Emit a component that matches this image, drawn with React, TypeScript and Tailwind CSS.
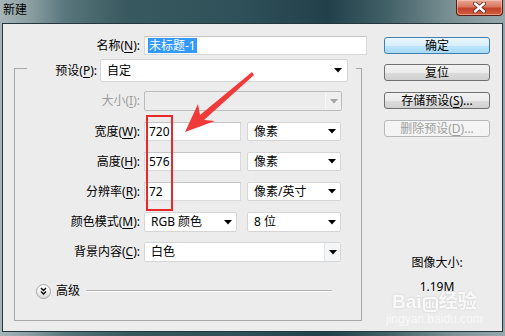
import React from 'react';

const font = "font-['Noto_Sans','Noto_Sans_CJK_SC',sans-serif]";

function DownArrow({ disabled = false }: { disabled?: boolean }) {
  return (
    <svg width="8" height="5" viewBox="0 0 8 5">
      <path d="M0 0h8L4 4.5z" fill={disabled ? '#a3a3a3' : '#000'} />
    </svg>
  );
}

function Label({ w, children, disabled = false }: { w: string; children: React.ReactNode; disabled?: boolean }) {
  return (
    <div className={`${w} shrink-0 text-right text-[12px] leading-[16px] ${disabled ? 'text-[#9c9c9c]' : 'text-black'}`}>
      {children}
    </div>
  );
}

function Key({ k }: { k: string }) {
  return <span className="underline underline-offset-[2px]">{k}</span>;
}

function Combo({ w, h, text, pr = 'pr-[4px]' }: { w: string; h: string; text: string; pr?: string }) {
  return (
    <div
      className={`${w} ${h} ${pr} flex shrink-0 items-center justify-between rounded-[2px] border border-[#d6d6d6] bg-white pl-[6px] text-[12px] leading-[16px] text-black`}
    >
      <span>{text}</span>
      <DownArrow />
    </div>
  );
}

function Field({ value }: { value: string }) {
  return (
    <div className="flex h-[19px] w-[97px] shrink-0 items-center border border-[#d9d9d9] border-t-[#c4c4c4] bg-white pl-[4px] text-[12px] leading-[16px] text-black">
      {value}
    </div>
  );
}

function Button({ children, main = false, disabled = false }: { children: React.ReactNode; main?: boolean; disabled?: boolean }) {
  const look = main
    ? 'border-[#3c7fb1] bg-[linear-gradient(180deg,#eaf6fd_0%,#d9f0fc_50%,#bee6fd_52%,#a7d9f5_100%)] text-black'
    : disabled
      ? 'border-[#b6b9bc] bg-[#f4f4f4] text-[#a0a0a0]'
      : 'border-[#707070] bg-[linear-gradient(180deg,#f2f2f2_0%,#ebebeb_50%,#dddddd_52%,#cfcfcf_100%)] text-black';
  return (
    <div className={`flex h-[17px] w-[106px] items-center justify-center rounded-[3px] border text-[12px] leading-[15px] ${look}`}>
      {children}
    </div>
  );
}

export default function App() {
  return (
    <div
      className={`${font} relative flex h-[336px] w-[505px] flex-col overflow-hidden bg-[linear-gradient(90deg,#a7b5b7_0%,#8a9ea1_6%,#58767c_13%,#38595f_25%,#2f5058_48%,#22404a_65%,#3f5e65_76%,#7d9396_90%,#96a7aa_100%)]`}
    >
      {/* title bar */}
      <div className="flex h-[23px] shrink-0 items-start justify-between">
        <div className="pl-[3px] pt-[2px] text-[12px] leading-[16px] text-black">新建</div>
        <div className="mr-[2px] flex h-[16px] w-[47px] items-center justify-center rounded-b-[4px] border border-t-0 border-[#5b1d14] bg-[linear-gradient(180deg,#e9a796_0%,#d9785f_45%,#c3422a_55%,#cf5d40_100%)] shadow-[inset_0_0_0_1px_rgba(255,220,200,0.45)]">
          <svg width="13" height="11" viewBox="0 0 13 11">
            <path d="M2 1.5l9 8M11 1.5l-9 8" stroke="#5a2418" strokeWidth="4" strokeLinecap="round" />
            <path d="M2 1.5l9 8M11 1.5l-9 8" stroke="#fff" strokeWidth="2.4" strokeLinecap="round" />
          </svg>
        </div>
      </div>

      {/* client area */}
      <div className="mx-[2px] mb-[4px] flex flex-1 border border-[#22383e] bg-[#ececec]">
        {/* left column */}
        <div className="flex w-[364px] shrink-0 flex-col">
          <div className="mt-[12px] flex items-center">
            <Label w="w-[137px]">
              名称(<Key k="N" />):
            </Label>
            <div className="ml-[4px] flex h-[19px] w-[223px] items-center border border-[#d9d9d9] border-t-[#c4c4c4] bg-white pl-[3px]">
              <span className="bg-[#3399ff] px-[1px] text-[12px] leading-[15px] text-white">未标题-1</span>
            </div>
          </div>

          <fieldset className="ml-[11px] w-[348px] border border-[#a9a9a9] pb-[21px]">
            <legend className="ml-[12px] pr-[8px] pt-[4px]">
              <div className="flex items-center">
                <Label w="w-[70px]">
                  预设(<Key k="P" />):
                </Label>
                <div className="ml-[3px]">
                  <Combo w="w-[248px]" h="h-[23px]" text="自定" pr="pr-[5px]" />
                </div>
              </div>
            </legend>

            <div className="mt-[9px] flex items-center">
              <Label w="w-[125px]" disabled>
                大小(<Key k="I" />):
              </Label>
              <div className="ml-[4px] flex h-[20px] w-[198px] rounded-[2px] border border-[#bcbcbc] bg-[#ececec]">
                <div className="flex-1" />
                <div className="flex w-[16px] items-center justify-center border-l border-[#f7f7f7] bg-[#efefef]">
                  <DownArrow disabled />
                </div>
              </div>
            </div>

            <div className="mt-[11px] flex items-center">
              <Label w="w-[125px]">
                宽度(<Key k="W" />):
              </Label>
              <div className="ml-[4px] flex items-center gap-[6px]">
                <Field value="720" />
                <Combo w="w-[94px]" h="h-[19px]" text="像素" />
              </div>
            </div>

            <div className="mt-[11px] flex items-center">
              <Label w="w-[125px]">
                高度(<Key k="H" />):
              </Label>
              <div className="ml-[4px] flex items-center gap-[6px]">
                <Field value="576" />
                <Combo w="w-[94px]" h="h-[19px]" text="像素" />
              </div>
            </div>

            <div className="mt-[11px] flex items-center">
              <Label w="w-[125px]">
                分辨率(<Key k="R" />):
              </Label>
              <div className="ml-[4px] flex items-center gap-[6px]">
                <Field value="72" />
                <Combo w="w-[94px]" h="h-[19px]" text="像素/英寸" />
              </div>
            </div>

            <div className="mt-[11px] flex items-center">
              <Label w="w-[125px]">
                颜色模式(<Key k="M" />):
              </Label>
              <div className="ml-[4px] flex items-center gap-[10px]">
                <Combo w="w-[93px]" h="h-[20px]" text="RGB 颜色" />
                <Combo w="w-[94px]" h="h-[20px]" text="8 位" />
              </div>
            </div>

            <div className="mt-[10px] flex items-center">
              <Label w="w-[125px]">
                背景内容(<Key k="C" />):
              </Label>
              <div className="ml-[4px] flex h-[20px] w-[197px] rounded-[2px] border border-[#d6d6d6] bg-white">
                <div className="flex flex-1 items-center pl-[6px] text-[12px] leading-[16px] text-black">白色</div>
                <div className="flex w-[16px] items-center justify-center border-l border-[#e3e3e3] bg-[#f4f6f8]">
                  <DownArrow />
                </div>
              </div>
            </div>

            <div className="mt-[21px] flex items-center">
              <div className="ml-[21px] flex h-[15px] w-[15px] items-center justify-center rounded-full border border-[#a5a5a5] bg-[linear-gradient(180deg,#ffffff_0%,#f1f1f1_50%,#d9d9d9_100%)]">
                <svg width="7" height="8" viewBox="0 0 7 8">
                  <path d="M1 1l2.5 2.5L6 1M1 4.5l2.5 2.5L6 4.5" fill="none" stroke="#000" strokeWidth="1.3" />
                </svg>
              </div>
              <div className="ml-[5px] text-[12px] leading-[16px] text-black">高级</div>
              <div className="ml-[6px] h-[2px] w-[246px] border-t border-b border-t-[#b4b4b4] border-b-white" />
            </div>
          </fieldset>
        </div>

        {/* right column */}
        <div className="ml-[17px] flex flex-col">
          <div className="mt-[13px] flex flex-col gap-[10px]">
            <Button main>确定</Button>
            <Button>复位</Button>
          </div>
          <div className="mt-[11px] flex flex-col gap-[11px]">
            <Button>
              存储预设(<Key k="S" />)...
            </Button>
            <Button disabled>
              删除预设(<Key k="D" />)...
            </Button>
          </div>
          <div className="mt-[118px] text-center text-[12px] leading-[16px] text-black">图像大小:</div>
          <div className="mt-[8px] text-center text-[12px] leading-[16px] text-black">1.19M</div>
        </div>
      </div>

      {/* annotations */}
      <div className="absolute left-[146px] top-[115px] h-[96px] w-[27px] border-2 border-[#e8282b]" />
      <svg className="pointer-events-none absolute left-0 top-0" width="505" height="336" viewBox="0 0 505 336">
        <polygon
          points="185,132 198,104 200,115 252,72 254,75 204,120 215,121"
          fill="#f03a3a"
        />
      </svg>

      {/* watermark */}
      <div className="pointer-events-none absolute left-[386px] top-[292px] flex flex-col items-center text-white/80">
        <div className="flex items-baseline font-['Liberation_Sans','Noto_Sans_CJK_SC',sans-serif] text-[19px] font-bold leading-[20px] drop-shadow-[0_0_1px_rgba(0,0,0,0.15)]">
          Bai
          <span className="mx-[1px] inline-block h-[15px] w-[15px] rounded-[4px] border-2 border-white/80 text-[11px] leading-[11px]">du</span>
          经验
        </div>
        <div className="font-['Liberation_Sans',sans-serif] text-[12px] leading-[14px] text-white/70">jingyan.baidu.com</div>
      </div>
    </div>
  );
}
